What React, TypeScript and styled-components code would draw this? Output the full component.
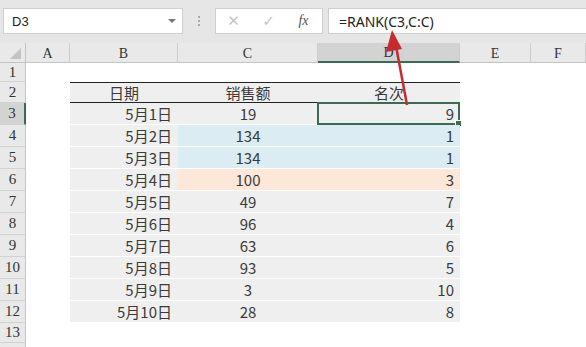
import React from "react";
import styled, { createGlobalStyle } from "styled-components";

const Global = createGlobalStyle`
  html, body { margin: 0; padding: 0; background: #fff; }
  body { width: 586px; height: 347px; overflow: hidden; font-family: "Noto Sans CJK SC", "Noto Sans", sans-serif; }
`;

const Page = styled.div`
  position: relative;
  width: 586px;
  height: 347px;
  overflow: hidden;
  background: #fff;
`;

const Toolbar = styled.div`
  height: 43px;
  background: #e6e6e6;
  display: flex;
  align-items: flex-start;
  padding: 8px 0 0 3px;
  box-sizing: border-box;
`;

const Box = styled.div<{ $w: number }>`
  width: ${(p) => p.$w}px;
  height: 26px;
  background: #fff;
  border: 1px solid #cfcfcf;
  box-sizing: border-box;
  display: flex;
  align-items: center;
  flex: none;
`;

const NameText = styled.span`
  flex: 1;
  padding-left: 8px;
  font-family: "Liberation Sans", Arial, sans-serif;
  font-size: 13px;
  color: #222;
`;

const Caret = styled.span`
  width: 0;
  height: 0;
  border-left: 4px solid transparent;
  border-right: 4px solid transparent;
  border-top: 4px solid #777;
  margin-right: 6px;
`;

const Grip = styled.div<{ $w: number }>`
  width: ${(p) => p.$w}px;
  height: 26px;
  display: flex;
  flex-direction: column;
  align-items: center;
  justify-content: center;
  gap: 2px;
  flex: none;
  & > i {
    width: 2px;
    height: 2px;
    background: #a8a8a8;
  }
`;

const FxBtn = styled.span`
  width: 35px;
  text-align: center;
  color: #c4c4c4;
  font-size: 15px;
  font-family: "DejaVu Sans", sans-serif;
`;

const FxLabel = styled.span`
  width: 35px;
  text-align: center;
  font-family: "Liberation Serif", serif;
  font-style: italic;
  font-size: 14px;
  color: #555;
`;

const FormulaText = styled.span`
  padding-left: 10px;
  font-family: "Noto Sans", "Liberation Sans", sans-serif;
  font-size: 14px;
  color: #222;
`;

const Sheet = styled.div`
  display: grid;
  grid-template-columns: 26px 44px 108px 140px 142px 71px 1fr;
  grid-template-rows: 20px 19px 21px repeat(10, 22px) 20px 20px;
`;

const ColHead = styled.div<{ $sel?: boolean }>`
  background: ${(p) => (p.$sel ? "#d3d3d3" : "#e9e9e9")};
  border-right: 1px solid #cdcdcd;
  border-bottom: ${(p) => (p.$sel ? "2px solid #3c6a52" : "1px solid #c4c4c4")};
  box-sizing: border-box;
  display: flex;
  align-items: center;
  justify-content: center;
  font-family: "Liberation Serif", serif;
  font-size: 14px;
  color: #333;
  padding-top: 2px;
`;

const Corner = styled.div`
  background: #e9e9e9;
  border-right: 1px solid #c4c4c4;
  border-bottom: 1px solid #c4c4c4;
  box-sizing: border-box;
  position: relative;
  &::after {
    content: "";
    position: absolute;
    right: 4px;
    bottom: 3px;
    border-left: 11px solid transparent;
    border-bottom: 11px solid #c2c2c2;
  }
`;

const RowHead = styled.div<{ $sel?: boolean }>`
  background: ${(p) => (p.$sel ? "#d3d3d3" : "#e9e9e9")};
  border-right: ${(p) => (p.$sel ? "2px solid #3c6a52" : "1px solid #c4c4c4")};
  border-bottom: 1px solid #d2d2d2;
  box-sizing: border-box;
  display: flex;
  align-items: center;
  justify-content: center;
  font-family: "Liberation Serif", serif;
  font-size: 15px;
  color: #333;
  overflow: hidden;
`;

const Blank = styled.div``;

type Tone = "grey" | "blue" | "peach";
const toneBg: Record<Tone, string> = {
  grey: "#f0efef",
  blue: "#dcecf3",
  peach: "#fce7d8",
};

const Cell = styled.div<{ $tone?: Tone; $align: "center" | "right"; $head?: boolean }>`
  position: relative;
  background: ${(p) => toneBg[p.$tone || "grey"]};
  box-sizing: border-box;
  display: flex;
  align-items: center;
  justify-content: ${(p) => (p.$align === "right" ? "flex-end" : "center")};
  padding: ${(p) => (p.$align === "right" ? "0 6px 0 0" : "0")};
  border-bottom: ${(p) => (p.$head ? "1.5px solid #222" : "1px solid #fff")};
  border-top: ${(p) => (p.$head ? "1.5px solid #222" : "none")};
  font-family: "Noto Sans CJK SC", "Noto Sans", sans-serif;
  font-size: 15px;
  color: #3a3a3a;
  line-height: 1;
`;

const Selection = styled.div`
  position: absolute;
  inset: -1px 0 -1px -1px;
  border: 2px solid #3c6a52;
  pointer-events: none;
  &::after {
    content: "";
    position: absolute;
    right: -4px;
    bottom: -4px;
    width: 5px;
    height: 5px;
    background: #3c6a52;
    border: 1px solid #fff;
  }
`;

const Arrow = styled.svg`
  position: absolute;
  left: 0;
  top: 0;
  pointer-events: none;
`;

const data: { d: string; v: number; r: number; tone?: Tone }[] = [
  { d: "5月1日", v: 19, r: 9 },
  { d: "5月2日", v: 134, r: 1, tone: "blue" },
  { d: "5月3日", v: 134, r: 1, tone: "blue" },
  { d: "5月4日", v: 100, r: 3, tone: "peach" },
  { d: "5月5日", v: 49, r: 7 },
  { d: "5月6日", v: 96, r: 4 },
  { d: "5月7日", v: 63, r: 6 },
  { d: "5月8日", v: 93, r: 5 },
  { d: "5月9日", v: 3, r: 10 },
  { d: "5月10日", v: 28, r: 8 },
];

const blanks = (n: number, k: string) =>
  Array.from({ length: n }, (_, i) => <Blank key={`${k}-${i}`} />);

export default function App() {
  return (
    <Page>
      <Global />
      <Toolbar>
        <Box $w={180}>
          <NameText>D3</NameText>
          <Caret />
        </Box>
        <Grip $w={32}>
          <i />
          <i />
          <i />
        </Grip>
        <Box $w={108}>
          <FxBtn>✕</FxBtn>
          <FxBtn>✓</FxBtn>
          <FxLabel>fx</FxLabel>
        </Box>
        <Grip $w={5} />
        <Box $w={262}>
          <FormulaText>=RANK(C3,C:C)</FormulaText>
        </Box>
      </Toolbar>
      <Sheet>
        <Corner />
        {["A", "B", "C", "D", "E", "F"].map((c) => (
          <ColHead key={c} $sel={c === "D"}>
            {c}
          </ColHead>
        ))}

        <RowHead>1</RowHead>
        {blanks(6, "r1")}

        <RowHead>2</RowHead>
        <Blank />
        <Cell $align="center" $head>日期</Cell>
        <Cell $align="center" $head>销售额</Cell>
        <Cell $align="center" $head>名次</Cell>
        {blanks(2, "r2")}

        {data.map((row, i) => (
          <React.Fragment key={row.d}>
            <RowHead $sel={i === 0}>{i + 3}</RowHead>
            <Blank />
            <Cell $align="right">{row.d}</Cell>
            <Cell $align="center" $tone={row.tone}>
              {row.v}
            </Cell>
            <Cell $align="right" $tone={row.tone}>
              {row.r}
              {i === 0 && <Selection />}
            </Cell>
            {blanks(2, `d${i}`)}
          </React.Fragment>
        ))}

        <RowHead>13</RowHead>
        {blanks(6, "r13")}
        <RowHead>14</RowHead>
      </Sheet>
      <Arrow width="586" height="347" viewBox="0 0 586 347">
        <line x1="407" y1="105" x2="396" y2="46" stroke="#c62b2e" strokeWidth="2.5" />
        <polygon points="392,30 386,52 402,49" fill="#c62b2e" />
      </Arrow>
    </Page>
  );
}
